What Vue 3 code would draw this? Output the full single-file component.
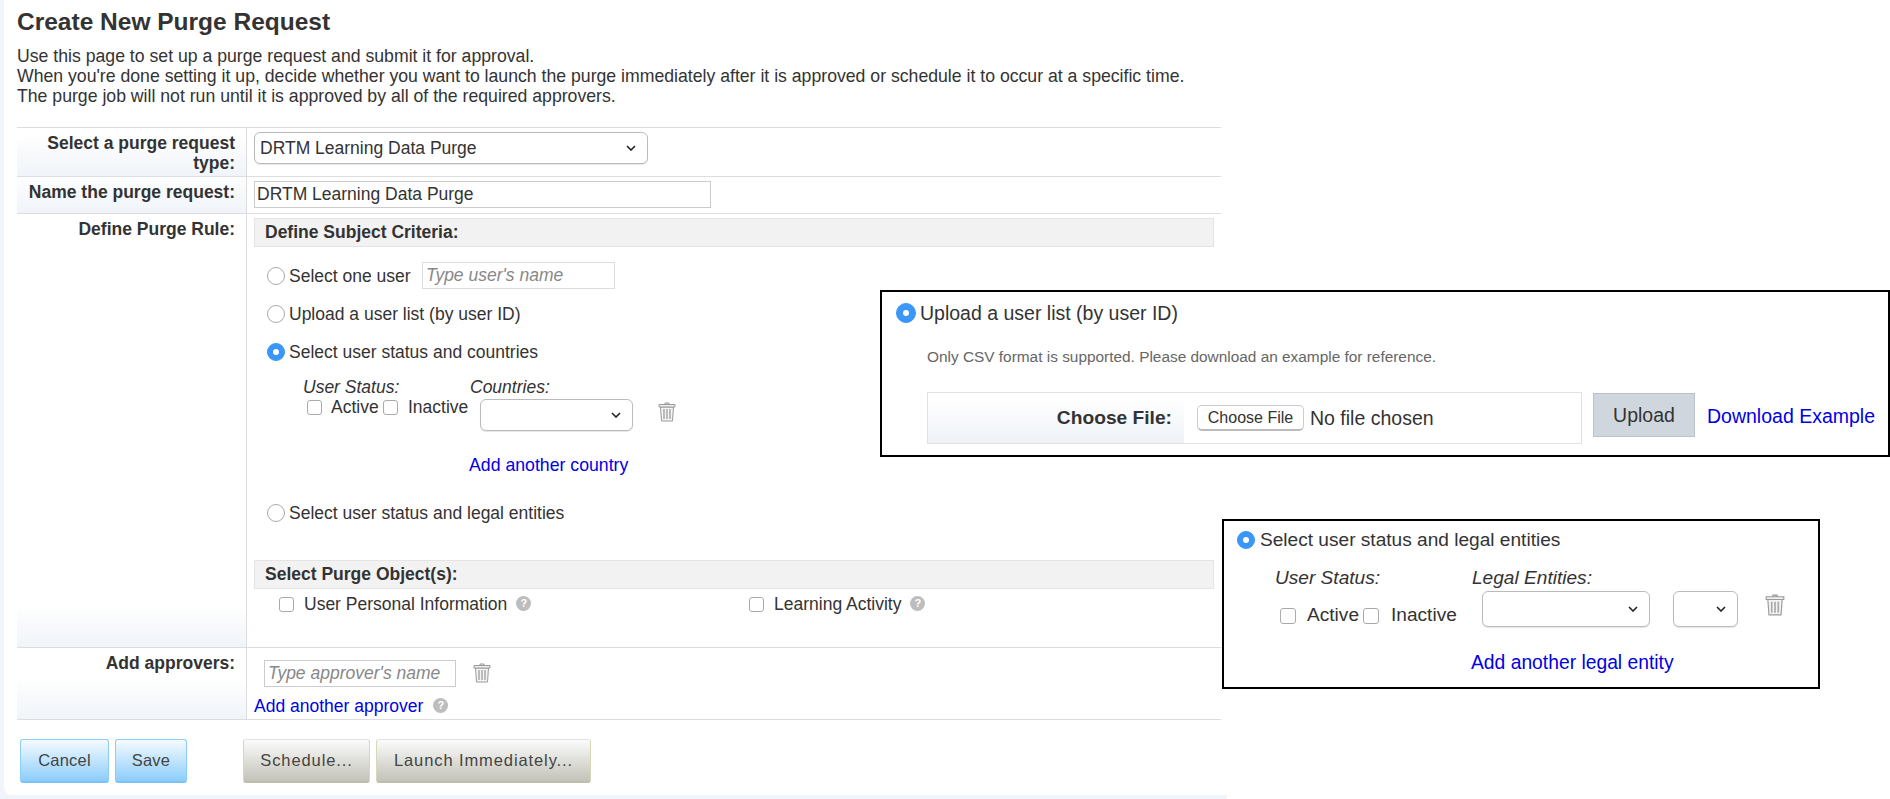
<script setup>
const trashBars = [6, 9, 12]
</script>

<template>
  <div class="page">
    <main class="sheet">
      <div class="inner">
        <h1 class="title">Create New Purge Request</h1>
        <p class="intro">
          Use this page to set up a purge request and submit it for approval.<br />
          When you're done setting it up, decide whether you want to launch the purge immediately after it is approved or schedule it to occur at a specific time.<br />
          The purge job will not run until it is approved by all of the required approvers.
        </p>

        <section class="form">
          <div class="row row-type">
            <div class="label">Select a purge request type:</div>
            <div class="cell">
              <div class="select select-type">
                <span>DRTM Learning Data Purge</span>
                <svg class="chev" viewBox="0 0 10 6"><path d="M1 1l4 4 4-4" /></svg>
              </div>
            </div>
          </div>

          <div class="row row-name">
            <div class="label">Name the purge request:</div>
            <div class="cell">
              <input class="text name-input" value="DRTM Learning Data Purge" />
            </div>
          </div>

          <div class="row row-rule">
            <div class="label">Define Purge Rule:</div>
            <div class="cell">
              <div class="bar">Define Subject Criteria:</div>

              <div class="opt opt-one">
                <span class="radio"></span>
                <span class="one-label">Select one user</span>
                <input class="text user-input" placeholder="Type user's name" />
              </div>
              <div class="opt opt-list">
                <span class="radio"></span>
                <span>Upload a user list (by user ID)</span>
              </div>
              <div class="opt opt-status">
                <span class="radio on"></span>
                <span>Select user status and countries</span>
              </div>

              <div class="detail">
                <div class="heads">
                  <em class="head-status">User Status:</em>
                  <em>Countries:</em>
                </div>
                <div class="controls">
                  <span class="check first"></span>
                  <span class="check-text active">Active</span>
                  <span class="check second"></span>
                  <span class="check-text inactive">Inactive</span>
                  <div class="select select-country">
                    <svg class="chev" viewBox="0 0 10 6"><path d="M1 1l4 4 4-4" /></svg>
                  </div>
                  <svg class="trash trash-country" viewBox="0 0 18 20">
                    <path class="t-body" d="M2.500 5h13l-1 14h-11z" />
                    <path v-for="x in trashBars" :key="x" class="t-bar" :d="`M${x} 7v10`" />
                    <path class="t-lid" d="M7 2.500V1h4v1.500M1 2.500h16v2.500H1z" />
                  </svg>
                </div>
                <a class="link add-country">Add another country</a>
              </div>

              <div class="opt opt-legal">
                <span class="radio"></span>
                <span>Select user status and legal entities</span>
              </div>

              <div class="bar bar-objects">Select Purge Object(s):</div>
              <div class="objects">
                <div class="object object-first">
                  <span class="check"></span>
                  <span class="obj-text">User Personal Information</span>
                  <span class="help">?</span>
                </div>
                <div class="object">
                  <span class="check"></span>
                  <span class="obj-text">Learning Activity</span>
                  <span class="help">?</span>
                </div>
              </div>
            </div>
          </div>

          <div class="row row-approvers">
            <div class="label">Add approvers:</div>
            <div class="cell">
              <div class="approver">
                <input class="text approver-input" placeholder="Type approver's name" />
                <svg class="trash trash-approver" viewBox="0 0 18 20">
                  <path class="t-body" d="M2.500 5h13l-1 14h-11z" />
                  <path v-for="x in trashBars" :key="x" class="t-bar" :d="`M${x} 7v10`" />
                  <path class="t-lid" d="M7 2.500V1h4v1.500M1 2.500h16v2.500H1z" />
                </svg>
              </div>
              <div class="add-approver">
                <a class="link">Add another approver</a>
                <span class="help">?</span>
              </div>
            </div>
          </div>
        </section>

        <div class="actions">
          <button class="btn blue cancel">Cancel</button>
          <button class="btn blue save">Save</button>
          <button class="btn olive schedule">Schedule...</button>
          <button class="btn olive launch">Launch Immediately...</button>
        </div>
      </div>
    </main>

    <aside class="callout upload-box">
      <div class="u-opt">
        <span class="radio on big"></span>
        <span>Upload a user list (by user ID)</span>
      </div>
      <p class="u-note">Only CSV format is supported. Please download an example for reference.</p>
      <div class="u-row">
        <div class="u-table">
          <div class="u-label">Choose File:</div>
          <button class="u-file">Choose File</button>
          <span class="u-none">No file chosen</span>
        </div>
        <button class="u-upload">Upload</button>
        <a class="link u-link">Download Example</a>
      </div>
    </aside>

    <aside class="callout legal-box">
      <div class="l-opt">
        <span class="radio on"></span>
        <span>Select user status and legal entities</span>
      </div>
      <div class="l-heads">
        <em class="l-head-status">User Status:</em>
        <em>Legal Entities:</em>
      </div>
      <div class="l-controls">
        <span class="check l-first"></span>
        <span class="l-text l-active">Active</span>
        <span class="check l-second"></span>
        <span class="l-text l-inactive">Inactive</span>
        <div class="select l-select-a">
          <svg class="chev" viewBox="0 0 10 6"><path d="M1 1l4 4 4-4" /></svg>
        </div>
        <div class="select l-select-b">
          <svg class="chev" viewBox="0 0 10 6"><path d="M1 1l4 4 4-4" /></svg>
        </div>
        <svg class="trash l-trash" viewBox="0 0 18 20">
          <path class="t-body" d="M2.500 5h13l-1 14h-11z" />
          <path v-for="x in trashBars" :key="x" class="t-bar" :d="`M${x} 7v10`" />
          <path class="t-lid" d="M7 2.500V1h4v1.500M1 2.500h16v2.500H1z" />
        </svg>
      </div>
      <a class="link l-link">Add another legal entity</a>
    </aside>
  </div>
</template>

<style scoped>
.page {
  position: relative;
  width: 1890px;
  height: 799px;
  overflow: hidden;
  background: #fff;
  font-family: "Liberation Sans", Arial, sans-serif;
  font-size: 17.5px;
  line-height: 20px;
  color: #333;
}
.sheet {
  width: 1227px;
  height: 799px;
  box-sizing: border-box;
  padding: 0 0 4px 4px;
  background: #f0f5fb;
}
.inner {
  height: 795px;
  box-sizing: border-box;
  padding: 6px 0 0 13px;
  background: #fff;
  border-bottom-left-radius: 8px;
}
.title {
  margin: 0;
  font-size: 24.5px;
  line-height: 32px;
  font-weight: 700;
  color: #333;
}
.intro {
  margin: 8px 0 21px;
  font-size: 17.66px;
  line-height: 20px;
}
.form {
  width: 1204px;
  border-bottom: 1px solid #ddd;
}
.row {
  display: flex;
  box-sizing: border-box;
  border-top: 1px solid #ddd;
}
.row-type { height: 49px; }
.row-name { height: 37px; }
.row-rule { height: 434px; }
.row-approvers { height: 72px; }
.label {
  width: 230px;
  flex: none;
  box-sizing: border-box;
  padding: 5px 11px 0 10px;
  text-align: right;
  font-weight: 700;
  border-right: 1px solid #ddd;
  background: linear-gradient(#fff calc(100% - 42px), #f0f4f9);
}
.cell {
  flex: 1;
  padding: 4px 0 0 7px;
}
.select {
  position: relative;
  box-sizing: border-box;
  display: flex;
  align-items: center;
  padding-left: 5px;
  background: #fff;
  border: 1px solid #bbb;
  border-radius: 6px;
  box-shadow: 0 1px 1px rgba(0, 0, 0, 0.1);
}
.chev {
  position: absolute;
  right: 11px;
  top: 50%;
  width: 10px;
  height: 6px;
  margin-top: -3px;
  fill: none;
  stroke: #222;
  stroke-width: 1.6;
}
.select-type {
  width: 394px;
  height: 32px;
}
.text {
  box-sizing: border-box;
  margin: 0;
  padding: 0 2px;
  border: 1px solid #ccc;
  background: #fff;
  font: inherit;
  color: #333;
  outline: none;
  display: block;
}
.text::placeholder {
  font-style: italic;
  color: #888;
  opacity: 1;
}
.name-input {
  width: 457px;
  height: 27px;
}
.bar {
  box-sizing: border-box;
  width: 960px;
  height: 29px;
  padding: 3px 0 0 10px;
  background: #f2f2f2;
  border: 1px solid #e4e4e4;
  font-weight: 700;
}
.opt {
  display: flex;
  align-items: center;
  gap: 4px;
  margin-left: 13px;
  height: 24px;
}
.opt-one {
  height: 27px;
  margin-top: 15px;
}
.opt-list { margin-top: 13px; }
.opt-status { margin-top: 14px; }
.opt-legal { margin-top: 26px; }
.one-label { width: 129px; }
.user-input {
  width: 193px;
  height: 27px;
  border-color: #ddd;
  padding: 0 3px;
}
.radio {
  flex: none;
  position: relative;
  box-sizing: border-box;
  width: 18px;
  height: 18px;
  border-radius: 50%;
  background: #fff;
  border: 1px solid #aaa;
}
.radio.on {
  background: #3a96f8;
  border-color: #3a96f8;
}
.radio.on::after {
  content: "";
  position: absolute;
  left: 50%;
  top: 50%;
  width: 6px;
  height: 6px;
  margin: -3px 0 0 -3px;
  border-radius: 50%;
  background: #fff;
}
.radio.big {
  width: 20px;
  height: 20px;
}
.detail { margin: 13px 0 0 49px; }
.heads { display: flex; }
.head-status { width: 167px; }
.controls {
  display: flex;
  align-items: flex-start;
}
.check {
  flex: none;
  box-sizing: border-box;
  width: 15px;
  height: 15px;
  margin-top: 3px;
  border: 1px solid #aaa;
  border-radius: 3px;
  background: #fff;
}
.first { margin-left: 4px; }
.second { margin-left: 4px; }
.check-text { margin-left: 9px; }
.active { width: 48px; }
.inactive { width: 61px; margin-left: 10px; }
.select-country {
  width: 153px;
  height: 32px;
  margin: 2px 0 0 11px;
}
.trash {
  flex: none;
  width: 18px;
  height: 20px;
}
.t-lid { fill: #efefef; stroke: #999; stroke-width: 1; }
.t-body { fill: #f4f4f4; stroke: #999; stroke-width: 1; }
.t-bar { fill: none; stroke: #a8a8a8; stroke-width: 1.5; }
.trash-country { margin: 5px 0 0 25px; }
.link {
  color: #0000e6;
  cursor: pointer;
}
.add-country {
  display: block;
  margin: 24px 0 0 166px;
  font-size: 17.7px;
}
.bar-objects { margin-top: 35px; }
.objects {
  display: flex;
  margin: 5px 0 0 25px;
}
.object {
  display: flex;
  align-items: flex-start;
}
.object-first { width: 470px; }
.obj-text { margin-left: 10px; }
.help {
  flex: none;
  width: 15px;
  height: 15px;
  margin: 2px 0 0 9px;
  border-radius: 50%;
  background: #bdbdbd;
  color: #fff;
  font-size: 11px;
  line-height: 15px;
  font-weight: 700;
  text-align: center;
}
.approver {
  display: flex;
  align-items: flex-start;
  margin: 8px 0 0 10px;
}
.approver-input {
  width: 192px;
  height: 27px;
  padding: 0 3px;
  border-color: #ccc;
}
.trash-approver { margin: 3px 0 0 17px; }
.add-approver {
  display: flex;
  margin-top: 9px;
}
.add-approver .help { margin-left: 10px; }
.actions {
  display: flex;
  margin: 19px 0 0 3px;
}
.btn {
  box-sizing: border-box;
  height: 44px;
  padding: 0;
  font-family: inherit;
  color: #444;
  border-radius: 3px;
  cursor: pointer;
}
.blue {
  font-size: 16.5px;
  letter-spacing: 0.2px;
  border: 1px solid #8ecdf7;
  border-bottom: 2px solid #7cc3f5;
  background: linear-gradient(#f5fbff, #8ccdfb);
}
.olive {
  font-size: 16.5px;
  letter-spacing: 0.9px;
  border: 1px solid #d8d8b8;
  border-top-color: #e3e3e3;
  border-bottom: 2px solid #bdbdb0;
  background: linear-gradient(#fbfbfb, #c3c3b8);
}
.cancel { width: 89px; }
.save { width: 72px; margin-left: 6px; }
.schedule { width: 127px; margin-left: 56px; }
.launch { width: 215px; margin-left: 6px; }

.callout {
  position: absolute;
  box-sizing: border-box;
  background: #fff;
  border: 2px solid #000;
}
.upload-box {
  left: 880px;
  top: 290px;
  width: 1010px;
  height: 167px;
  padding: 8px 0 0 14px;
  font-size: 19.5px;
}
.u-opt {
  display: flex;
  align-items: center;
  gap: 4px;
  height: 26px;
}
.u-note {
  margin: 21px 0 0 31px;
  font-size: 15.4px;
  line-height: 20px;
  color: #666;
}
.u-row {
  display: flex;
  align-items: flex-start;
  margin: 25px 0 0 31px;
}
.u-table {
  display: flex;
  align-items: center;
  box-sizing: border-box;
  width: 655px;
  height: 52px;
  border: 1px solid #e2e2e2;
}
.u-label {
  box-sizing: border-box;
  align-self: stretch;
  width: 256px;
  padding-right: 12px;
  line-height: 50px;
  text-align: right;
  font-weight: 700;
  font-size: 19.2px;
  background: linear-gradient(#fff 10%, #eef2f7);
}
.u-file {
  box-sizing: border-box;
  width: 107px;
  height: 26px;
  margin-left: 13px;
  padding: 0;
  font-family: inherit;
  font-size: 16px;
  color: #333;
  background: #fff;
  border: 1px solid #ccc;
  border-bottom: 2px solid #bbb;
  border-radius: 5px;
}
.u-none { margin-left: 6px; }
.u-upload {
  box-sizing: border-box;
  width: 102px;
  height: 44px;
  margin: 1px 0 0 11px;
  padding: 0;
  font-family: inherit;
  font-size: 19.5px;
  color: #333;
  background: #d0d6de;
  border: 1px solid #b9c1c9;
}
.u-link {
  margin-left: 12px;
  line-height: 48px;
}
.legal-box {
  left: 1222px;
  top: 519px;
  width: 598px;
  height: 170px;
  padding: 7px 0 0 13px;
  font-size: 19.1px;
}
.l-opt {
  display: flex;
  align-items: center;
  gap: 5px;
  height: 24px;
}
.l-heads {
  display: flex;
  margin: 15px 0 0 38px;
  line-height: 22px;
}
.l-head-status { width: 197px; }
.l-controls {
  display: flex;
  align-items: flex-start;
  margin: 2px 0 0 43px;
}
.l-first, .l-second {
  width: 16px;
  height: 16px;
  margin-top: 17px;
}
.l-second { margin-left: 6px; }
.l-text { margin-top: 14px; }
.l-active { width: 50px; margin-left: 11px; }
.l-inactive { width: 65px; margin-left: 12px; }
.l-select-a {
  width: 168px;
  height: 36px;
  margin-left: 26px;
}
.l-select-b {
  width: 65px;
  height: 36px;
  margin-left: 23px;
}
.l-trash {
  width: 20px;
  height: 22px;
  margin: 3px 0 0 27px;
}
.l-link {
  display: block;
  margin: 26px 0 0 234px;
  font-size: 19.3px;
}
</style>
